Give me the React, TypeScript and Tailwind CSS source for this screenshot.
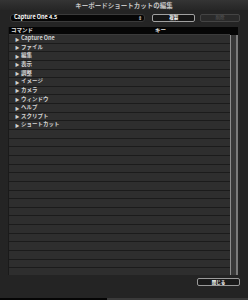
const items = [
  'Capture One',
  'ファイル',
  '編集',
  '表示',
  '調整',
  'イメージ',
  'カメラ',
  'ウィンドウ',
  'ヘルプ',
  'スクリプト',
  'ショートカット',
];

const font = { fontFamily: '"Noto Sans CJK JP", "Liberation Sans", sans-serif' };

export default function App() {
  const rows = Array.from({ length: 28 }, (_, i) => items[i] ?? '');

  return (
    <div
      className="w-[248px] h-[300px] bg-[#242424] flex flex-col overflow-hidden text-[#d8d8d8]"
      style={font}
    >
      {/* title bar */}
      <div className="h-[10px] bg-gradient-to-b from-[#343434] to-[#262626] flex items-center justify-center">
        <span className="text-[6.5px] leading-none text-[#c4c4c4] font-bold">キーボードショートカットの編集</span>
      </div>

      {/* dropdown + buttons */}
      <div className="h-[13px] flex items-center pl-[10px] pr-[8px] mt-[1px]">
        <div className="w-[136px] h-[8px] bg-[#060606] rounded-[3px] border border-[#3a3a3a] flex items-center justify-between pl-[3px] pr-[2px]">
          <span className="text-[5.5px] leading-none font-bold text-white">Capture One 4.5</span>
          <span className="text-[5px] leading-none text-white">⇕</span>
        </div>
        <div className="ml-[7px] w-[43px] h-[8px] bg-[#151515] rounded-[2px] border border-[#a0a0a0] flex items-center justify-center">
          <span className="text-[4.5px] leading-none text-white font-bold">複製</span>
        </div>
        <div className="ml-[5px] w-[40px] h-[8px] bg-[#2a2a2a] rounded-[2px] border border-[#444] flex items-center justify-center">
          <span className="text-[4.5px] leading-none text-[#5c5c5c]">削除</span>
        </div>
      </div>

      {/* table */}
      <div className="ml-[8px] mr-[10px] mt-[3px] h-[248px] flex border-l border-[#1a1a1a]">
        <div className="flex-1 flex flex-col overflow-hidden">
          <div className="h-[8px] bg-[#050505] flex items-center shrink-0 border-b border-[#3a3a3a]">
            <span className="w-[146px] pl-[2px] text-[5.5px] leading-none font-bold text-[#e0e0e0]">コマンド</span>
            <span className="text-[5.5px] leading-none font-bold text-[#e0e0e0]">キー</span>
          </div>
          {rows.map((label, i) => (
            <div
              key={i}
              className="h-[8.65px] shrink-0 bg-[#2e2e2e] border-b border-[#1b1b1b] flex items-center pl-[6px]"
            >
              {label && (
                <>
                  <span className="text-[4.5px] leading-none text-[#d0d0d0] mr-[1.5px]">▶</span>
                  <span className="text-[5.5px] leading-none font-semibold text-[#d4d4d4]">{label}</span>
                </>
              )}
            </div>
          ))}
        </div>
        {/* scroll bar */}
        <div className="w-[8px] flex flex-col">
          <div className="h-[8px] bg-[#050505]" />
          <div className="flex-1 flex">
            <div className="w-[1px] bg-[#8c8c8c]" />
            <div className="w-[5px] bg-[#383838]" />
            <div className="w-[2px] bg-[#7a7a7a]" />
          </div>
        </div>
      </div>

      {/* bottom button */}
      <div className="flex justify-end pr-[8px] mt-[3px]">
        <div className="w-[43px] h-[8px] bg-[#1a1a1a] rounded-[2px] border border-[#9a9a9a] flex items-center justify-center">
          <span className="text-[4.5px] leading-none text-white font-bold">閉じる</span>
        </div>
      </div>

      <div className="flex-1" />
      <div className="h-[2px] flex">
        <div className="w-[107px] bg-[#050505]" />
        <div className="flex-1 bg-[#3a3a3a]" />
      </div>
    </div>
  );
}
